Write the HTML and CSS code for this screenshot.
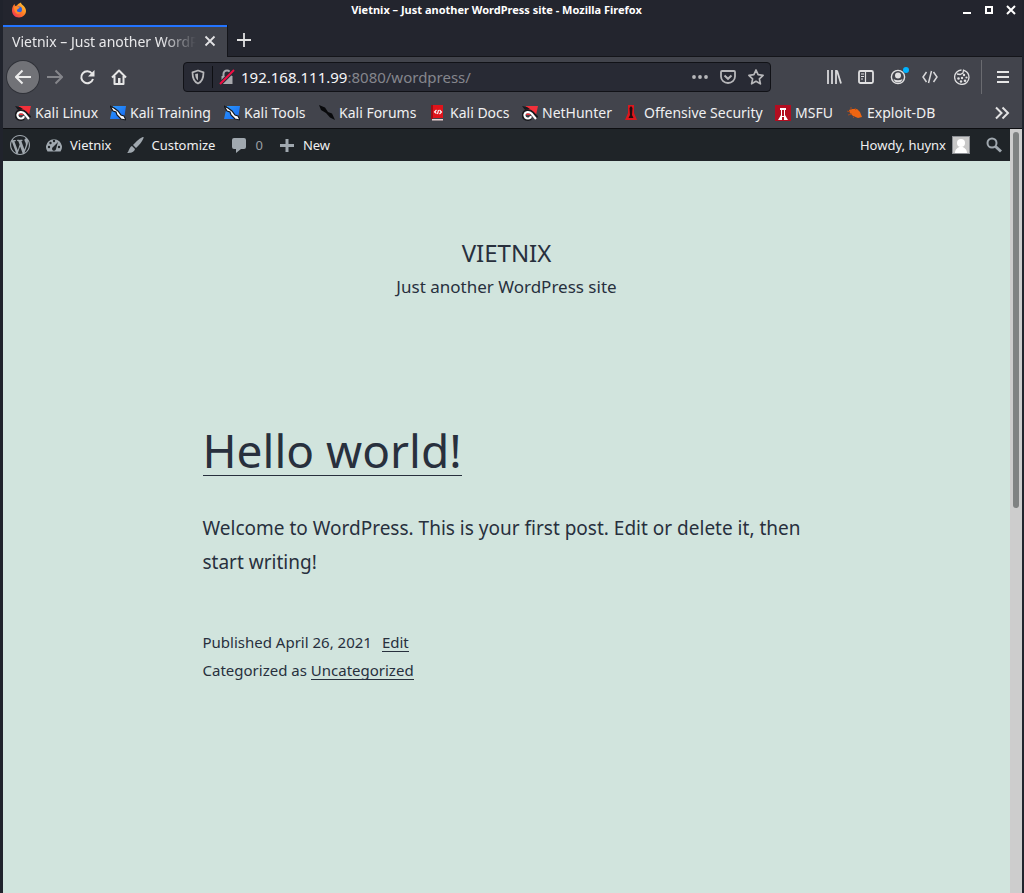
FILE: index.html
```html
<!DOCTYPE html>
<html lang="en">
<head>
<meta charset="utf-8">
<title>Vietnix – Just another WordPress site</title>
<link rel="stylesheet" href="styles.css">
</head>
<body>
<svg class="defs" aria-hidden="true">
  <defs>
    <linearGradient id="fox" x1="1" y1="0" x2="0" y2="1"><stop offset="0" stop-color="#ffdd35"/><stop offset=".5" stop-color="#ff7a24"/><stop offset="1" stop-color="#ec2463"/></linearGradient>
    <linearGradient id="blue" x1="0" y1="0" x2="1" y2="1"><stop offset="0" stop-color="#2b9bff"/><stop offset="1" stop-color="#1766f0"/></linearGradient>
    <symbol id="dragon-red" viewBox="0 0 16 16"><path d="M4 1h12l-2 9H1z" fill="#f3303a"/><path d="M0 1l5 1 3 2-5 1z" fill="#18191d"/><path d="M15 13L10 8C7 5 3 6 2 9s1 5 4 5l3-1" fill="none" stroke="#18191d" stroke-width="4"/><path d="M14 14L9.500 8.500C7 6 3 7 2.500 9.500S4 13.500 6 13.500s3-1 2.500-2.500" fill="none" stroke="#fff" stroke-width="2.200"/></symbol>
    <symbol id="dragon-blue" viewBox="0 0 16 16"><path d="M3 1h13l-2 13H0z" fill="url(#blue)"/><path d="M0 1l4 2 4 3 3 4 3 1 2 4-5-1-4-4-1-3-3-1z" fill="#fff" stroke="#15171d" stroke-width="1.200"/></symbol>
  </defs>
</svg>
<div class="window">
  <header class="titlebar">
    <svg class="i16" viewBox="0 0 16 16"><path d="M8 15.500C3.500 15.500 1 12 1 8.500c0-3 1-5 2.500-6.500L4 4l2-.5C7 1.500 9 1 10 .5 10 3 15 4 15 9c0 3.500-3 6.500-7 6.500z" fill="url(#fox)"/><circle cx="8" cy="7.500" r="3" fill="#2a62df"/><path d="M3 5c2-1 3 0 5 0 1 0 1 1-1 2s-1 4 3 3c-3 4-7 1-7-5z" fill="#ff8a2a"/></svg>
    <h1 class="window-title">Vietnix – Just another WordPress site - Mozilla Firefox</h1>
    <div class="window-buttons">
      <button aria-label="Minimize"><svg class="i10" viewBox="0 0 10 10"><path d="M1 8h8" stroke="#fff" stroke-width="2"/></svg></button>
      <button aria-label="Maximize"><svg class="i10" viewBox="0 0 10 10"><path d="M2 2h6v6H2z" fill="none" stroke="#fff" stroke-width="2"/></svg></button>
      <button aria-label="Close"><svg class="i10" viewBox="0 0 10 10"><path d="M1 1l8 8M9 1L1 9" stroke="#fff" stroke-width="2"/></svg></button>
    </div>
  </header>
  <div class="tabs">
    <div class="tab"><span class="tab-label">Vietnix – Just another WordPress site</span><button aria-label="Close tab"><svg class="i12" viewBox="0 0 12 12"><path d="M1.500 1.500l9 9M10.500 1.500l-9 9" stroke="#e2e2e4" stroke-width="1.800"/></svg></button></div>
    <button class="new-tab" aria-label="New tab"><svg class="i16" viewBox="0 0 16 16"><path d="M8 1v14M1 8h14" stroke="#e2e2e2" stroke-width="1.800"/></svg></button>
  </div>
  <nav class="toolbar" aria-label="Navigation">
    <div class="nav-buttons">
      <button class="back" aria-label="Back"><svg class="i16" viewBox="0 0 16 16"><path d="M16 8H1M7.500 1.500L1 8l6.500 6.500" fill="none" stroke="#ececec" stroke-width="2"/></svg></button>
      <button class="forward" aria-label="Forward"><svg class="i16" viewBox="0 0 16 16"><path d="M0 8h15M8.500 1.500L15 8l-6.500 6.500" fill="none" stroke="#85868b" stroke-width="2"/></svg></button>
      <button aria-label="Reload"><svg class="i16" viewBox="0 0 16 16"><path d="M13 4.500A6 6 0 1 0 14 10" fill="none" stroke="#e6e6e6" stroke-width="2"/><path d="M15.500 1v6.500H9z" fill="#e6e6e6"/></svg></button>
      <button aria-label="Home"><svg class="i16" viewBox="0 0 16 16"><path d="M1 8.500L8 1.500l7 7M3.500 7v8h9V7" fill="none" stroke="#e6e6e6" stroke-width="2" stroke-linejoin="round"/><path d="M7 9h2.500v6H7z" fill="#e6e6e6"/></svg></button>
    </div>
    <div class="address">
      <svg class="i16" viewBox="0 0 16 16"><path d="M8 1.500l5.500 1.800C13.500 9 12 13 8 14.500 4 13 2.500 9 2.500 3.300z" fill="none" stroke="#b7b7ba" stroke-width="1.800" stroke-linejoin="round"/><path d="M8 4.500v7C6 10 5.200 8 5.200 5z" fill="#b7b7ba"/></svg>
      <span class="sep"></span>
      <svg class="i16" viewBox="0 0 16 16"><path d="M4.500 8V5a3.500 3.500 0 0 1 7 0v3" fill="none" stroke="#a9a9ae" stroke-width="2"/><path d="M2.500 7h11v8h-11z" fill="#a9a9ae"/><path d="M1 15L15 1" stroke="#282a34" stroke-width="4"/><path d="M1 15L15 1" stroke="#f20d43" stroke-width="2"/></svg>
      <a class="url" href="#">192.168.111.99<span>:8080/wordpress/</span></a>
      <button aria-label="Page actions"><svg class="i16" viewBox="0 0 16 16"><g fill="#b7b7ba"><circle cx="2" cy="8" r="1.900"/><circle cx="8" cy="8" r="1.900"/><circle cx="14" cy="8" r="1.900"/></g></svg></button>
      <button aria-label="Save to Pocket"><svg class="i16" viewBox="0 0 16 16"><path d="M2 2h12q1 0 1 1v4.500a7 6.500 0 0 1-14 0V3q0-1 1-1z" fill="none" stroke="#b7b7ba" stroke-width="1.800"/><path d="M4.500 6.500L8 9.800l3.500-3.300" fill="none" stroke="#b7b7ba" stroke-width="2"/></svg></button>
      <button aria-label="Bookmark this page"><svg class="i16" viewBox="0 0 16 16"><path d="M8 1l2.100 4.700 5 .6-3.700 3.500 1 5L8 12.300l-4.400 2.500 1-5L.9 6.300l5-.6z" fill="none" stroke="#b7b7ba" stroke-width="1.700" stroke-linejoin="round"/></svg></button>
    </div>
    <div class="tools">
      <button aria-label="Library"><svg class="i16" viewBox="0 0 16 16"><path d="M2 1v14M6 1v14M10 1v14M11 1.500l4 13" stroke="#d8d8da" stroke-width="1.800"/></svg></button>
      <button aria-label="Sidebars"><svg class="i16" viewBox="0 0 16 16"><rect x="1" y="2" width="14" height="12" rx="1.500" fill="none" stroke="#e0e0e1" stroke-width="1.800"/><path d="M7.500 2v12M3 5h3M3 7.500h3M3 10h2" stroke="#e0e0e1" stroke-width="1.200"/></svg></button>
      <button class="account" aria-label="Account"><svg class="i16" viewBox="0 0 16 16"><circle cx="8" cy="8" r="6.600" fill="none" stroke="#e0e0e1" stroke-width="1.400"/><circle cx="8" cy="6.500" r="3" fill="#e0e0e1"/><path d="M3.500 10q4.500 2.500 9 0-1 3.500-4.500 3.500T3.500 10z" fill="#e0e0e1"/></svg><i class="badge"></i></button>
      <button aria-label="Developer tools"><svg class="i16" viewBox="0 0 16 16"><path d="M4.500 3L1 8l3.500 5M11.500 3L15 8l-3.500 5M9.500 2l-3 12" fill="none" stroke="#d8d8da" stroke-width="1.500"/></svg></button>
      <button aria-label="Cookies"><svg class="i16" viewBox="0 0 16 16"><path d="M7.500 1A7.200 7.200 0 1 0 15 8.500c0-3-1.500-5.500-4-6.700L9.500 1.200 9 4 6 5.500 3 5" fill="none" stroke="#e0e0e1" stroke-width="1.300"/><g fill="#e0e0e1"><circle cx="10" cy="6" r="1.200"/><circle cx="12.500" cy="8.500" r="1.100"/><circle cx="4.500" cy="9.500" r="1.300"/><circle cx="8" cy="9" r="1.200"/><circle cx="7" cy="12.500" r="1.200"/><circle cx="11" cy="11.800" r="1.300"/></g></svg></button>
      <span class="divider"></span>
      <button aria-label="Menu"><svg class="i16" viewBox="0 0 16 16"><path d="M2 3h12M2 8h12M2 13h12" stroke="#e6e6e6" stroke-width="2"/></svg></button>
    </div>
  </nav>
  <nav class="bookmarks" aria-label="Bookmarks">
    <a href="#"><svg class="i16"><use href="#dragon-red"/></svg>Kali Linux</a>
    <a href="#"><svg class="i16"><use href="#dragon-blue"/></svg>Kali Training</a>
    <a href="#"><svg class="i16"><use href="#dragon-blue"/></svg>Kali Tools</a>
    <a href="#"><svg class="i16" viewBox="0 0 16 16"><path d="M0 0l6 2.500 3 4.500 4 1.500 3 6.500-5-2.500L7 8 2 5z" fill="#090a0c"/></svg>Kali Forums</a>
    <a href="#"><svg class="i16" viewBox="0 0 16 16"><path d="M2 0h11v13H2z" fill="#e0141b"/><path d="M1 0h2v14H1z" fill="#9d0e15"/><path d="M2 14h11v1.500H2z" fill="#ebd1d1"/><path d="M6.500 5l-2 2 2 1.500M9.500 5l2 2-2 2M8.500 5l-1 4" fill="none" stroke="#fff" stroke-width="1.100"/></svg>Kali Docs</a>
    <a href="#"><svg class="i16"><use href="#dragon-red"/></svg>NetHunter</a>
    <a href="#"><svg class="i16" viewBox="0 0 16 16"><path d="M4 0h6v8l3 7H1l3-7z" fill="#db171d"/><path d="M7 1l1.500 2-.5 7 1.500 3h-5L6 10l-.5-7z" fill="#250c0f"/></svg>Offensive Security</a>
    <a href="#"><svg class="i16" viewBox="0 0 16 16"><path d="M0 0h16v16H0z" fill="#b20d20"/><path d="M5 3h6v2h-1v5l3 5H9v-3H7v3H3l3-5V5H5z" fill="#fff"/><path d="M8 5v6" stroke="#b20d20" stroke-width="2"/></svg>MSFU</a>
    <a href="#"><svg class="i16" viewBox="0 0 16 16"><path d="M2 5l3-1 5 0 3 3 2 5-4 1-5-2-3-3z" fill="#ef6511"/><path d="M0 6l3 1M4 2v3M8 3l1 2M1 10l4-1M6 13l2-2" stroke="#a74a1c" stroke-width="1"/></svg>Exploit-DB</a>
    <button class="more" aria-label="More bookmarks"><svg class="i16" viewBox="0 0 16 16"><path d="M2 2.500L7.500 8 2 13.500M8.500 2.500L14 8l-5.500 5.500" fill="none" stroke="#e2e2e3" stroke-width="2"/></svg></button>
  </nav>
  <div class="viewport">
    <div class="page">
      <nav class="adminbar" aria-label="Toolbar">
        <a href="#" aria-label="About WordPress"><svg class="i20" viewBox="0 0 20 20"><path fill="#a0a8af" d="M20 10c0-5.510-4.490-10-10-10C4.480 0 0 4.490 0 10c0 5.520 4.480 10 10 10 5.510 0 10-4.480 10-10zM7.780 15.370L4.370 6.220c.55-.02 1.170-.08 1.170-.08.5-.06.44-1.130-.06-1.110 0 0-1.450.11-2.370.11-.18 0-.37 0-.58-.01C4.120 2.690 6.870 1.110 10 1.110c2.330 0 4.450.87 6.050 2.340-.68-.11-1.650.39-1.650 1.580 0 .74.45 1.360.9 2.100.35.61.55 1.360.55 2.460 0 1.490-1.400 5-1.400 5l-3.030-8.370c.54-.02.82-.17.82-.17.5-.05.44-1.250-.06-1.220 0 0-1.440.12-2.380.12-.87 0-2.330-.12-2.330-.12-.5-.03-.56 1.200-.06 1.220l.92.08 1.260 3.410zM17.410 10c.24-.64.74-1.870.43-4.250.7 1.290 1.050 2.710 1.050 4.250 0 3.290-1.730 6.240-4.400 7.780.97-2.590 1.940-5.200 2.920-7.780zM6.100 18.090C3.120 16.650 1.110 13.530 1.110 10c0-1.300.23-2.480.72-3.590C3.250 10.300 4.670 14.200 6.100 18.090zm4.030-6.630l2.580 6.980c-.86.29-1.760.45-2.710.45-.79 0-1.570-.11-2.290-.33.81-2.380 1.620-4.740 2.420-7.100z"/></svg></a>
        <a href="#"><svg class="i20" viewBox="0 0 20 20"><path d="M3.500 16.500A8 7.800 0 1 1 16.500 16.500z" fill="#a0a8af"/><g fill="#1f2428"><circle cx="5" cy="12" r="1.200"/><circle cx="6.500" cy="8" r="1.200"/><circle cx="10" cy="6" r="1.200"/><circle cx="15" cy="12" r="1.200"/><path d="M14 7l-2 7a2 2 0 1 1-3-2z"/></g></svg>Vietnix</a>
        <a href="#"><svg class="i20" viewBox="0 0 20 20"><path d="M18.500 2c1 1-4 8.500-7.500 11l-3-3C10.500 7 17 1 18.500 2zM7 11l3 3c-1 3.500-4 4-8 4 2-1 2-6 5-7z" fill="#a0a8af"/></svg>Customize</a>
        <a class="comments" href="#"><svg class="i20" viewBox="0 0 20 20"><path d="M5 3h10q2 0 2 2v7q0 2-2 2h-3l-5 4v-4H5q-2 0-2-2V5q0-2 2-2z" fill="#a0a8af"/></svg>0</a>
        <a href="#"><svg class="i20" viewBox="0 0 20 20"><path d="M10 4v13M3 10.500h14" stroke="#a0a8af" stroke-width="3"/></svg>New</a>
        <a class="howdy" href="#">Howdy, huynx<svg class="i18" viewBox="0 0 18 18"><path d="M0 0h18v18H0z" fill="#8c8f94"/><path d="M1 1h16v16H1z" fill="#c8c8c8"/><circle cx="9" cy="7" r="4" fill="#fff"/><path d="M3 17c0-4 3-5 4-6h4c1 1 4 2 4 6z" fill="#fff"/></svg></a>
        <button aria-label="Search"><svg class="i20" viewBox="0 0 20 20"><circle cx="8" cy="8" r="4.500" fill="none" stroke="#a0a8af" stroke-width="2"/><path d="M11.500 11.500l5.500 5" stroke="#a0a8af" stroke-width="3"/></svg></button>
      </nav>
      <header class="site-header">
        <h2>VIETNIX</h2>
        <p>Just another WordPress site</p>
      </header>
      <article class="post">
        <h3><a href="#">Hello world!</a></h3>
        <p class="body">Welcome to WordPress. This is your first post. Edit or delete it, then start writing!</p>
        <footer class="meta">
          <div><span>Published April 26, 2021</span><a class="edit" href="#">Edit</a></div>
          <div>Categorized as <a href="#">Uncategorized</a></div>
        </footer>
      </article>
    </div>
    <div class="scrollbar"><div class="thumb"></div></div>
  </div>
</div>
</body>
</html>
```
FILE: styles.css
```css
* { box-sizing: border-box; }
body { margin: 0; background: #20232c; font-family: "Noto Sans", sans-serif; }
h1, h2, h3, p { margin: 0; font-weight: 400; }
button { padding: 0; border: 0; background: none; font: inherit; color: inherit; display: flex; align-items: center; justify-content: center; }
a { color: inherit; text-decoration: none; }
svg { display: block; flex: none; }
.defs { position: absolute; width: 0; height: 0; }
.i10 { width: 10px; height: 10px; }
.i12 { width: 12px; height: 12px; }
.i16 { width: 16px; height: 16px; }
.i18 { width: 18px; height: 18px; }
.i20 { width: 20px; height: 20px; }

.window { min-height: 100vh; display: flex; flex-direction: column; padding: 0 2px 0 3px; background: #20232c; }
.titlebar { height: 25px; display: flex; align-items: center; padding: 0 6px 5px 8px; background: #23252e; }
.window-title { flex: 1; text-align: center; color: #fff; font-size: 11px; font-weight: 700; line-height: 16px; padding-left: 4px; }
.window-buttons { display: flex; gap: 12px; }

.tabs { height: 32px; display: flex; background: #23252e; border-bottom: 1px solid #14151a; }
.tab { width: 224px; height: 32px; display: flex; align-items: center; justify-content: space-between; padding: 0 11px 2px 9px; background: #42444c; border-top: 2px solid #2374ff; color: #e8e8ea; font-size: 14px; }
.tab-label { width: 184px; overflow: hidden; white-space: nowrap; mask-image: linear-gradient(to right, #000 150px, transparent 184px); }
.new-tab { width: 33px; border-left: 1px solid #14151a; padding-bottom: 1px; }

.toolbar { height: 40px; display: flex; align-items: center; background: #42444c; padding: 0 3px 0 4px; }
.nav-buttons { display: flex; width: 176px; }
.nav-buttons button { width: 32px; height: 32px; }
.nav-buttons .back { border-radius: 50%; background: #717277; box-shadow: 0 0 0 1px #303239; }
.address { flex: 1; height: 30px; display: flex; align-items: center; gap: 6px; padding: 0 3px 0 6px; background: #282a34; border: 1px solid #111217; border-radius: 4px; }
.address button { width: 22px; height: 24px; }
.sep { width: 1px; height: 22px; background: #0e0f13; }
.url { flex: 1; color: #f5f5f7; font-size: 15px; }
.url span { color: #85868d; }
.tools { width: 248px; display: flex; justify-content: flex-end; align-items: center; }
.tools button { width: 32px; height: 32px; }
.divider { width: 1px; height: 34px; margin: 0 5px 0 3px; background: #6a6b70; }
.account { position: relative; }
.badge { position: absolute; right: 5px; top: 6px; width: 6px; height: 6px; border-radius: 50%; background: #00b3ff; }

.bookmarks { height: 32px; display: grid; grid-template-columns: 95px 114px 95px 111px 92px 102px 151px 72px 1fr 24px; align-items: center; padding: 0 8px 0 12px; background: #42444c; border-bottom: 1px solid #0d0e11; color: #f0f0f1; font-size: 14px; }
.bookmarks a { display: flex; align-items: center; gap: 4px; white-space: nowrap; }

.viewport { flex: 1; display: flex; }
.page { flex: 1; background: #d1e4dd; color: #28303d; }
.adminbar { height: 32px; display: flex; align-items: center; gap: 14px; padding: 0 6px 0 7px; background: #1f2428; color: #f0f0f1; font-size: 13px; }
.adminbar a { display: flex; align-items: center; gap: 6px; }
.adminbar .comments { color: #9a9fa4; }
.howdy { margin-left: auto; }

.site-header { padding: 74px 0 0; text-align: center; }
.site-header h2 { font-size: 24px; line-height: 36px; }
.site-header p { font-size: 17px; line-height: 32px; }
.post { max-width: 610px; margin: 116px auto 0; padding: 0 1px; }
.post a { border-bottom: 1px solid #28303d; }
.post h3 { font-size: 46px; line-height: 62px; }
.post h3 a { display: inline-block; line-height: 50px; }
.body { margin-top: 30px; font-size: 19px; line-height: 34px; }
.meta { margin-top: 49px; font-size: 15px; line-height: 28px; }
.meta a { display: inline-block; line-height: 18px; }
.meta .edit { margin-left: 10px; }

.scrollbar { width: 12px; background: #cdcdcd; padding: 3px; }
.thumb { width: 6px; height: 376px; background: #7f8282; border-radius: 3px; }
```
